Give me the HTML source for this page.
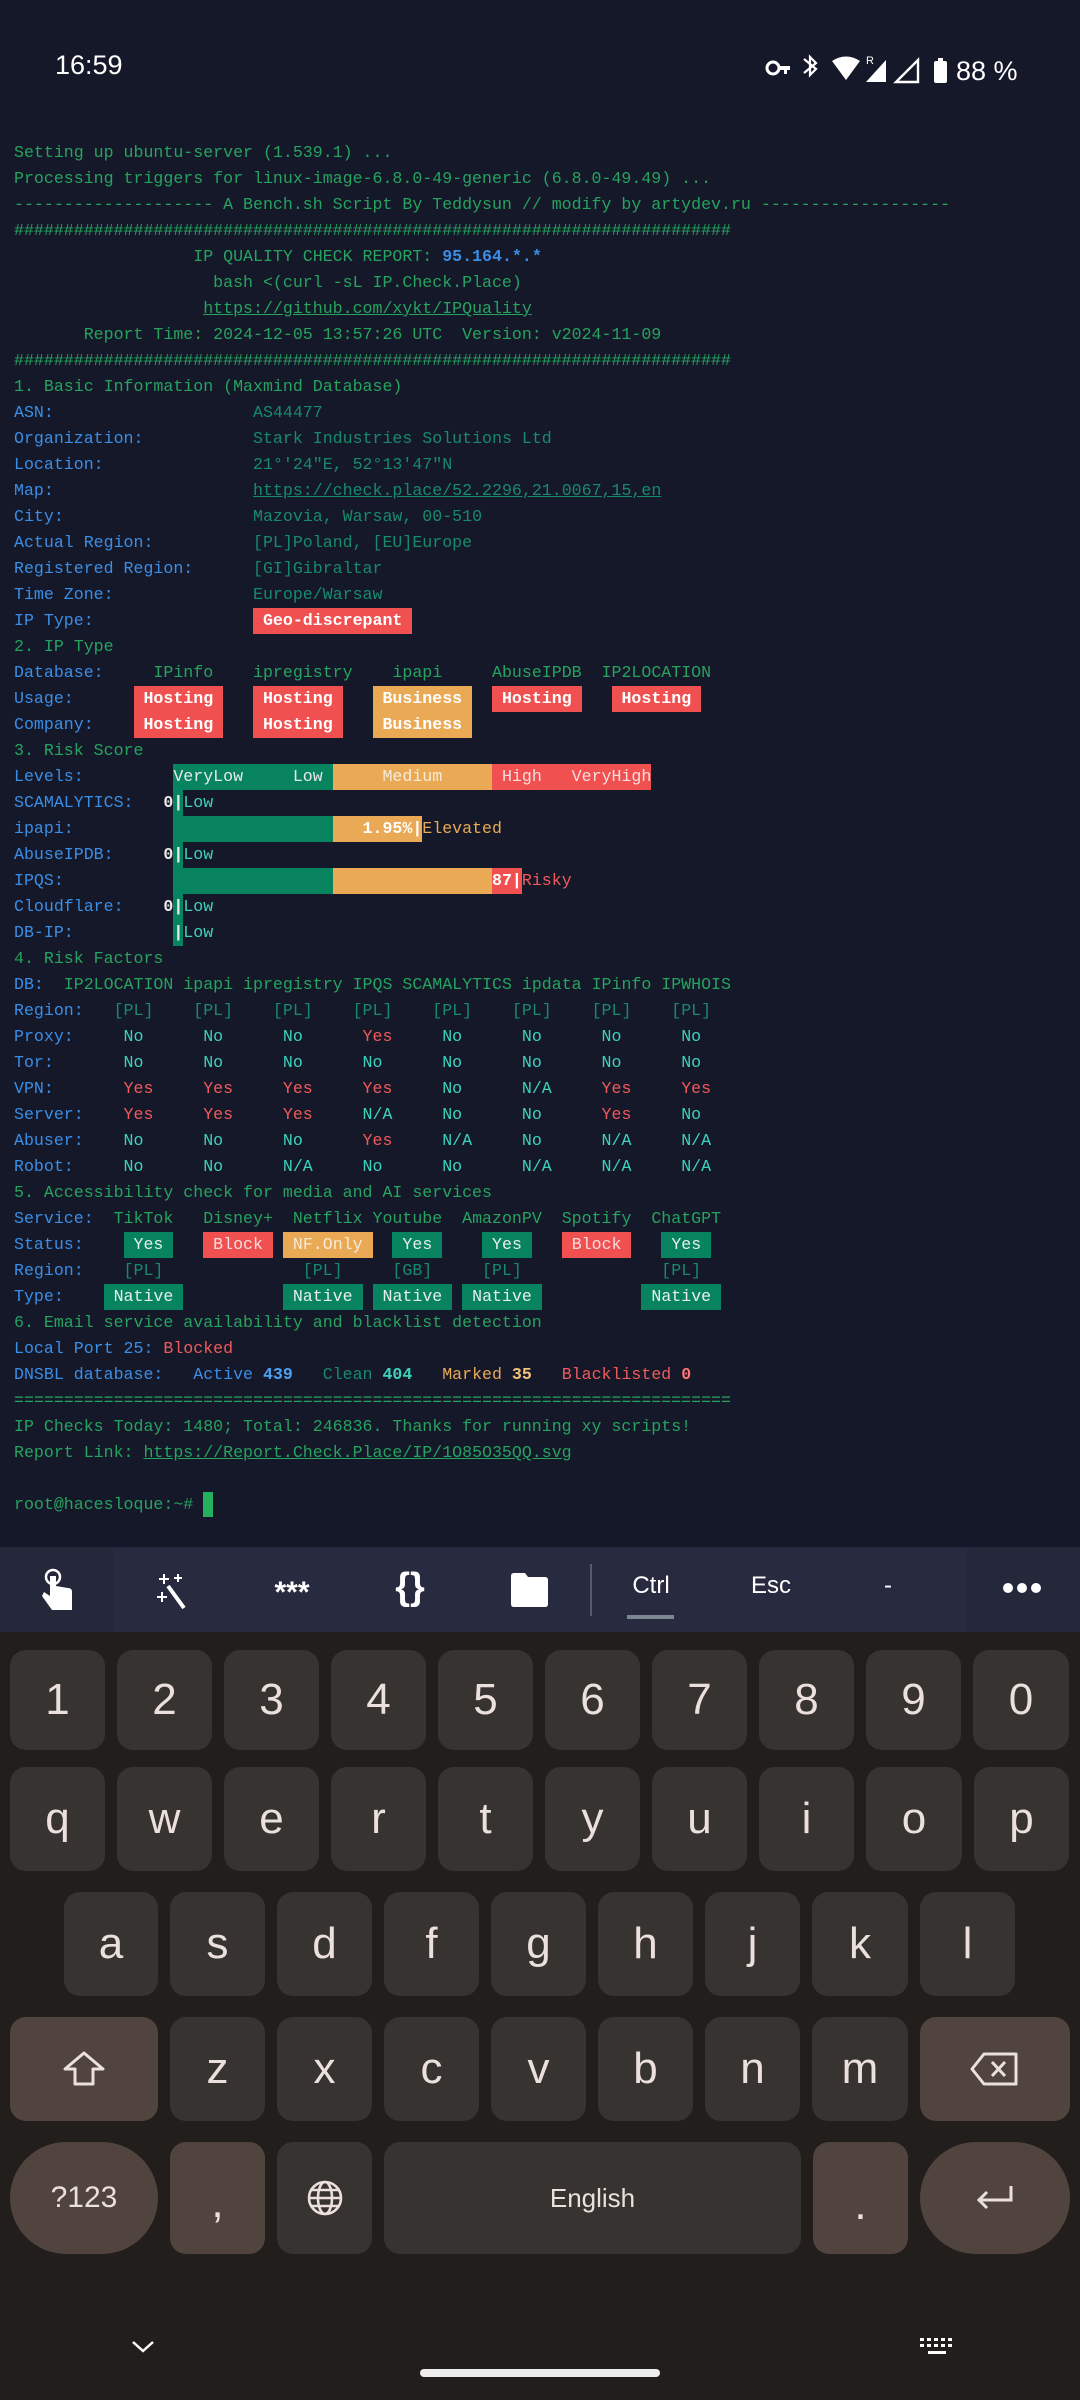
<!DOCTYPE html>
<html><head><meta charset="utf-8">
<style>
*{margin:0;padding:0;box-sizing:border-box}
body{width:1080px;height:2400px;background:#151829;position:relative;overflow:hidden;font-family:"Liberation Sans",sans-serif}
#term{position:absolute;left:14px;top:140px;font-family:"Liberation Mono",monospace;font-size:16.6px;line-height:26px;color:#25a35f}
#term>div{height:26px;white-space:pre}
.b{color:#3a8ee6}.t{color:#178a6c}.c{color:#3cd2bc}.r{color:#f05a5a}.o{color:#e9a955}.w{color:#e8e8e8;font-weight:bold}
.u{text-decoration:underline}
.x{display:inline-block;height:26px;line-height:26px;vertical-align:top}
.gb{background:#07845f;color:#e6efe9}.rb{background:#f05050;color:#fff;font-weight:bold}.ob{background:#e9a955;color:#fff;font-weight:bold}
.rb2{background:#f05050;color:#f6dede}.ob2{background:#e9a955;color:#f8ecd8}
.lv{color:#e8e8e8}
.st{position:absolute;color:#fff}
.tb{position:absolute;top:1547px;height:85px;background:#282b40}
.kb{position:absolute;left:0;top:1632px;width:1080px;height:768px;background:#211e1c}
.k{position:absolute;background:#373330;border-radius:16px;color:#ece0dc;font-size:44px;display:flex;align-items:center;justify-content:center;height:104px}
.br{background:#51443e}
.ti{position:absolute;color:#fff;top:1572px;font-size:24px;text-align:center}
</style></head><body>
<div class="st" style="left:55px;top:50px;font-size:27px">16:59</div>
<svg style="position:absolute;left:760px;top:50px" width="300" height="36" viewBox="0 0 300 36">
<g fill="#fff">
<circle cx="13" cy="18" r="6" fill="none" stroke="#fff" stroke-width="3"/><rect x="18" y="16" width="12" height="4"/><rect x="24" y="18" width="3" height="6"/>
<path d="M44 9 L56 19 L50 25 L50 7 L56 13 L44 23" fill="none" stroke="#fff" stroke-width="2.2"/>
<path d="M72 11 Q86 2 100 11 L86 30 Z"/>
<text x="106" y="14" font-size="11" font-family="Liberation Sans">R</text>
<path d="M106 32 L126 32 L126 10 Z"/>
<path d="M136 32 L158 32 L158 10 Z" fill="none" stroke="#fff" stroke-width="2.4"/>
<rect x="174" y="11" width="13" height="22" rx="2"/><rect x="178" y="8" width="5" height="4"/>
</g>
<text x="196" y="30" font-size="27" fill="#fff" font-family="Liberation Sans">88 %</text>
</svg>

<div id="term">
<div>Setting up ubuntu-server (1.539.1) ...</div>
<div>Processing triggers for linux-image-6.8.0-49-generic (6.8.0-49.49) ...</div>
<div>-------------------- A Bench.sh Script By Teddysun // modify by artydev.ru -------------------</div>
<div>########################################################################</div>
<div>                  <span>IP QUALITY CHECK REPORT: </span><b class="b">95.164.*.*</b></div>
<div>                    bash &lt;(curl -sL IP.Check.Place)</div>
<div>                   <span class="u">https://github.com/xykt/IPQuality</span></div>
<div>       Report Time: 2024-12-05 13:57:26 UTC  Version: v2024-11-09</div>
<div>########################################################################</div>
<div>1. Basic Information (Maxmind Database)</div>
<div><span class="b">ASN:                    </span><span class="t">AS44477</span></div>
<div><span class="b">Organization:           </span><span class="t">Stark Industries Solutions Ltd</span></div>
<div><span class="b">Location:               </span><span class="t">21°'24"E, 52°13'47"N</span></div>
<div><span class="b">Map:                    </span><span class="t u">https://check.place/52.2296,21.0067,15,en</span></div>
<div><span class="b">City:                   </span><span class="t">Mazovia, Warsaw, 00-510</span></div>
<div><span class="b">Actual Region:          </span><span class="t">[PL]Poland, [EU]Europe</span></div>
<div><span class="b">Registered Region:      </span><span class="t">[GI]Gibraltar</span></div>
<div><span class="b">Time Zone:              </span><span class="t">Europe/Warsaw</span></div>
<div><span class="b">IP Type:                </span><span class="x rb"> Geo-discrepant </span></div>
<div>2. IP Type</div>
<div><span class="b">Database:     </span>IPinfo    ipregistry    ipapi     AbuseIPDB  IP2LOCATION</div>
<div><span class="b">Usage:      </span><span class="x rb"> Hosting </span>   <span class="x rb"> Hosting </span>   <span class="x ob"> Business </span>  <span class="x rb"> Hosting </span>   <span class="x rb"> Hosting </span></div>
<div><span class="b">Company:    </span><span class="x rb"> Hosting </span>   <span class="x rb"> Hosting </span>   <span class="x ob"> Business </span></div>
<div>3. Risk Score</div>
<div><span class="b">Levels:         </span><span class="x gb lv">VeryLow     Low </span><span class="x ob2">     Medium     </span><span class="x rb2"> High   VeryHigh</span></div>
<div><span class="b">SCAMALYTICS:   </span><span class="w">0</span><span class="x gb w">|</span><span class="c">Low</span></div>
<div><span class="b">ipapi:          </span><span class="x gb">                </span><span class="x ob">   1.95%|</span><span class="o">Elevated</span></div>
<div><span class="b">AbuseIPDB:     </span><span class="w">0</span><span class="x gb w">|</span><span class="c">Low</span></div>
<div><span class="b">IPQS:           </span><span class="x gb">                </span><span class="x ob">                </span><span class="x rb">87|</span><span class="r">Risky</span></div>
<div><span class="b">Cloudflare:    </span><span class="w">0</span><span class="x gb w">|</span><span class="c">Low</span></div>
<div><span class="b">DB-IP:          </span><span class="x gb w">|</span><span class="c">Low</span></div>
<div>4. Risk Factors</div>
<div><span class="b">DB:  </span>IP2LOCATION ipapi ipregistry IPQS SCAMALYTICS ipdata IPinfo IPWHOIS</div>
<div><span class="b">Region:   </span><span class="t">[PL]    [PL]    [PL]    [PL]    [PL]    [PL]    [PL]    [PL]</span></div>
<div><span class="b">Proxy:     </span><span class="c">No      No      No      </span><span class="r">Yes     </span><span class="c">No      No      No      No</span></div>
<div><span class="b">Tor:       </span><span class="c">No      No      No      No      No      No      No      No</span></div>
<div><span class="b">VPN:       </span><span class="r">Yes     Yes     Yes     Yes     </span><span class="c">No      N/A     </span><span class="r">Yes     Yes</span></div>
<div><span class="b">Server:    </span><span class="r">Yes     Yes     Yes     </span><span class="c">N/A     No      No      </span><span class="r">Yes     </span><span class="c">No</span></div>
<div><span class="b">Abuser:    </span><span class="c">No      No      No      </span><span class="r">Yes     </span><span class="c">N/A     No      N/A     N/A</span></div>
<div><span class="b">Robot:     </span><span class="c">No      No      N/A     No      No      N/A     N/A     N/A</span></div>
<div>5. Accessibility check for media and AI services</div>
<div><span class="b">Service:  </span>TikTok   Disney+  Netflix Youtube  AmazonPV  Spotify  ChatGPT</div>
<div><span class="b">Status:    </span><span class="x gb"> Yes </span>   <span class="x rb2"> Block </span> <span class="x ob2"> NF.Only </span>  <span class="x gb"> Yes </span>    <span class="x gb"> Yes </span>   <span class="x rb2"> Block </span>   <span class="x gb"> Yes </span></div>
<div><span class="b">Region:    </span><span class="t">[PL]              [PL]     [GB]     [PL]              [PL]</span></div>
<div><span class="b">Type:    </span><span class="x gb"> Native </span>          <span class="x gb"> Native </span> <span class="x gb"> Native </span> <span class="x gb"> Native </span>          <span class="x gb"> Native </span></div>
<div>6. Email service availability and blacklist detection</div>
<div><span class="b">Local Port 25: </span><span class="r">Blocked</span></div>
<div><span class="b">DNSBL database:   Active <b style="color:#4aa3f0">439</b>   </span><span class="t">Clean </span><b class="c">404</b>   <span class="o">Marked <b style="color:#f3c27a">35</b></span>   <span class="r">Blacklisted <b style="color:#f77">0</b></span></div>
<div>========================================================================</div>
<div>IP Checks Today: 1480; Total: 246836. Thanks for running xy scripts!</div>
<div>Report Link: <span class="u">https://Report.Check.Place/IP/1O85O35QQ.svg</span></div>
<div></div>
<div>root@hacesloque:~# <span class="x" style="background:#25b060;width:10px;height:25px"></span></div>
</div>

<div class="tb" style="left:0;width:1080px"></div>
<div class="tb" style="left:0;width:113px;background:#25283b"></div>
<div class="tb" style="left:967px;width:113px;background:#25283b"></div>
<svg style="position:absolute;left:40px;top:1568px" width="36" height="46" viewBox="0 0 36 46"><circle cx="13" cy="9" r="7" fill="none" stroke="#fff" stroke-width="2.5"/><path d="M10 8 L10 28 L4 24 L2 28 L12 42 L32 42 L32 24 Q32 20 28 20 L16 18 L16 8 Z" fill="#fff"/></svg>
<svg style="position:absolute;left:156px;top:1572px" width="34" height="38" viewBox="0 0 34 38"><path d="M12 14 L28 36" stroke="#fff" stroke-width="4"/><path d="M8 2v10M3 7h10M22 2v8M18 6h8M6 20v10M1 25h10" stroke="#fff" stroke-width="2"/></svg>
<div class="ti" style="left:262px;width:60px;font-size:30px;top:1576px;font-weight:bold">***</div>
<div class="ti" style="left:385px;width:50px;font-size:38px;top:1566px;font-weight:bold">{}</div>
<svg style="position:absolute;left:509px;top:1572px" width="40" height="36" viewBox="0 0 40 36"><path d="M2 4 Q2 1 5 1 L16 1 L19 5 L36 5 Q39 5 39 8 L39 32 Q39 35 36 35 L5 35 Q2 35 2 32 Z" fill="#fff"/></svg>
<div style="position:absolute;left:590px;top:1564px;width:2px;height:52px;background:#555a6c"></div>
<div class="ti" style="left:621px;width:60px">Ctrl</div>
<div style="position:absolute;left:627px;top:1615px;width:47px;height:4px;background:#7a8690"></div>
<div class="ti" style="left:741px;width:60px">Esc</div>
<div class="ti" style="left:868px;width:40px">-</div>
<svg style="position:absolute;left:1002px;top:1581px" width="40" height="14"><circle cx="6" cy="7" r="5" fill="#fff"/><circle cx="20" cy="7" r="5" fill="#fff"/><circle cx="34" cy="7" r="5" fill="#fff"/></svg>

<div class="kb"></div>
<div class="k" style="left:10px;top:1650px;width:95px;height:100px">1</div>
<div class="k" style="left:117px;top:1650px;width:95px;height:100px">2</div>
<div class="k" style="left:224px;top:1650px;width:95px;height:100px">3</div>
<div class="k" style="left:331px;top:1650px;width:95px;height:100px">4</div>
<div class="k" style="left:438px;top:1650px;width:95px;height:100px">5</div>
<div class="k" style="left:545px;top:1650px;width:95px;height:100px">6</div>
<div class="k" style="left:652px;top:1650px;width:95px;height:100px">7</div>
<div class="k" style="left:759px;top:1650px;width:95px;height:100px">8</div>
<div class="k" style="left:866px;top:1650px;width:95px;height:100px">9</div>
<div class="k" style="left:973px;top:1650px;width:96px;height:100px">0</div>
<div class="k" style="left:10px;top:1767px;width:95px">q</div>
<div class="k" style="left:117px;top:1767px;width:95px">w</div>
<div class="k" style="left:224px;top:1767px;width:95px">e</div>
<div class="k" style="left:331px;top:1767px;width:95px">r</div>
<div class="k" style="left:438px;top:1767px;width:95px">t</div>
<div class="k" style="left:545px;top:1767px;width:95px">y</div>
<div class="k" style="left:652px;top:1767px;width:95px">u</div>
<div class="k" style="left:759px;top:1767px;width:95px">i</div>
<div class="k" style="left:866px;top:1767px;width:96px">o</div>
<div class="k" style="left:974px;top:1767px;width:95px">p</div>
<div class="k" style="left:64px;top:1892px;width:94px">a</div>
<div class="k" style="left:170px;top:1892px;width:95px">s</div>
<div class="k" style="left:277px;top:1892px;width:95px">d</div>
<div class="k" style="left:384px;top:1892px;width:95px">f</div>
<div class="k" style="left:491px;top:1892px;width:95px">g</div>
<div class="k" style="left:598px;top:1892px;width:95px">h</div>
<div class="k" style="left:705px;top:1892px;width:95px">j</div>
<div class="k" style="left:812px;top:1892px;width:96px">k</div>
<div class="k" style="left:920px;top:1892px;width:95px">l</div>
<div class="k br" style="left:10px;top:2017px;width:148px"><svg width="44" height="36" viewBox="0 0 44 36"><path d="M22 2 L41 18 L31 18 L31 33 L13 33 L13 18 L3 18 Z" fill="none" stroke="#ece0dc" stroke-width="3" stroke-linejoin="round"/></svg></div>
<div class="k" style="left:170px;top:2017px;width:95px">z</div>
<div class="k" style="left:277px;top:2017px;width:95px">x</div>
<div class="k" style="left:384px;top:2017px;width:95px">c</div>
<div class="k" style="left:491px;top:2017px;width:95px">v</div>
<div class="k" style="left:598px;top:2017px;width:95px">b</div>
<div class="k" style="left:705px;top:2017px;width:95px">n</div>
<div class="k" style="left:812px;top:2017px;width:96px">m</div>
<div class="k br" style="left:920px;top:2017px;width:150px"><svg width="50" height="34" viewBox="0 0 50 34"><path d="M14 2 L46 2 L46 32 L14 32 L2 17 Z" fill="none" stroke="#ece0dc" stroke-width="3" stroke-linejoin="round"/><path d="M22 10 L35 24 M35 10 L22 24" stroke="#ece0dc" stroke-width="3"/></svg></div>
<div class="k br" style="left:10px;top:2142px;width:148px;height:112px;border-radius:56px;font-size:30px">?123</div>
<div class="k br" style="left:170px;top:2142px;width:95px;height:112px;font-size:44px;padding-top:10px">,</div>
<div class="k" style="left:277px;top:2142px;width:95px;height:112px"><svg width="38" height="38" viewBox="0 0 38 38" fill="none" stroke="#ece0dc" stroke-width="2.6"><circle cx="19" cy="19" r="16"/><ellipse cx="19" cy="19" rx="7" ry="16"/><path d="M3 19h32M6 11h26M6 27h26"/></svg></div>
<div class="k" style="left:384px;top:2142px;width:417px;height:112px;font-size:26px">English</div>
<div class="k br" style="left:813px;top:2142px;width:95px;height:112px;font-size:44px;padding-top:14px">.</div>
<div class="k br" style="left:920px;top:2142px;width:150px;height:112px;border-radius:56px"><svg width="40" height="28" viewBox="0 0 40 28" fill="none" stroke="#ece0dc" stroke-width="3"><path d="M36 2 L36 16 L4 16 M12 8 L4 16 L12 24"/></svg></div>
<svg style="position:absolute;left:131px;top:2340px" width="24" height="14"><path d="M2 2 L12 11 L22 2" fill="none" stroke="#fff" stroke-width="2.5"/></svg>
<div style="position:absolute;left:420px;top:2369px;width:240px;height:8px;border-radius:4px;background:#eee"></div>
<svg style="position:absolute;left:920px;top:2338px" width="36" height="20" fill="#fff"><rect x="0" y="0" width="4" height="3"/><rect x="7" y="0" width="4" height="3"/><rect x="14" y="0" width="4" height="3"/><rect x="21" y="0" width="4" height="3"/><rect x="28" y="0" width="4" height="3"/><rect x="0" y="6" width="4" height="3"/><rect x="7" y="6" width="4" height="3"/><rect x="14" y="6" width="4" height="3"/><rect x="21" y="6" width="4" height="3"/><rect x="28" y="6" width="4" height="3"/><rect x="8" y="13" width="18" height="3"/></svg>
</body></html>
